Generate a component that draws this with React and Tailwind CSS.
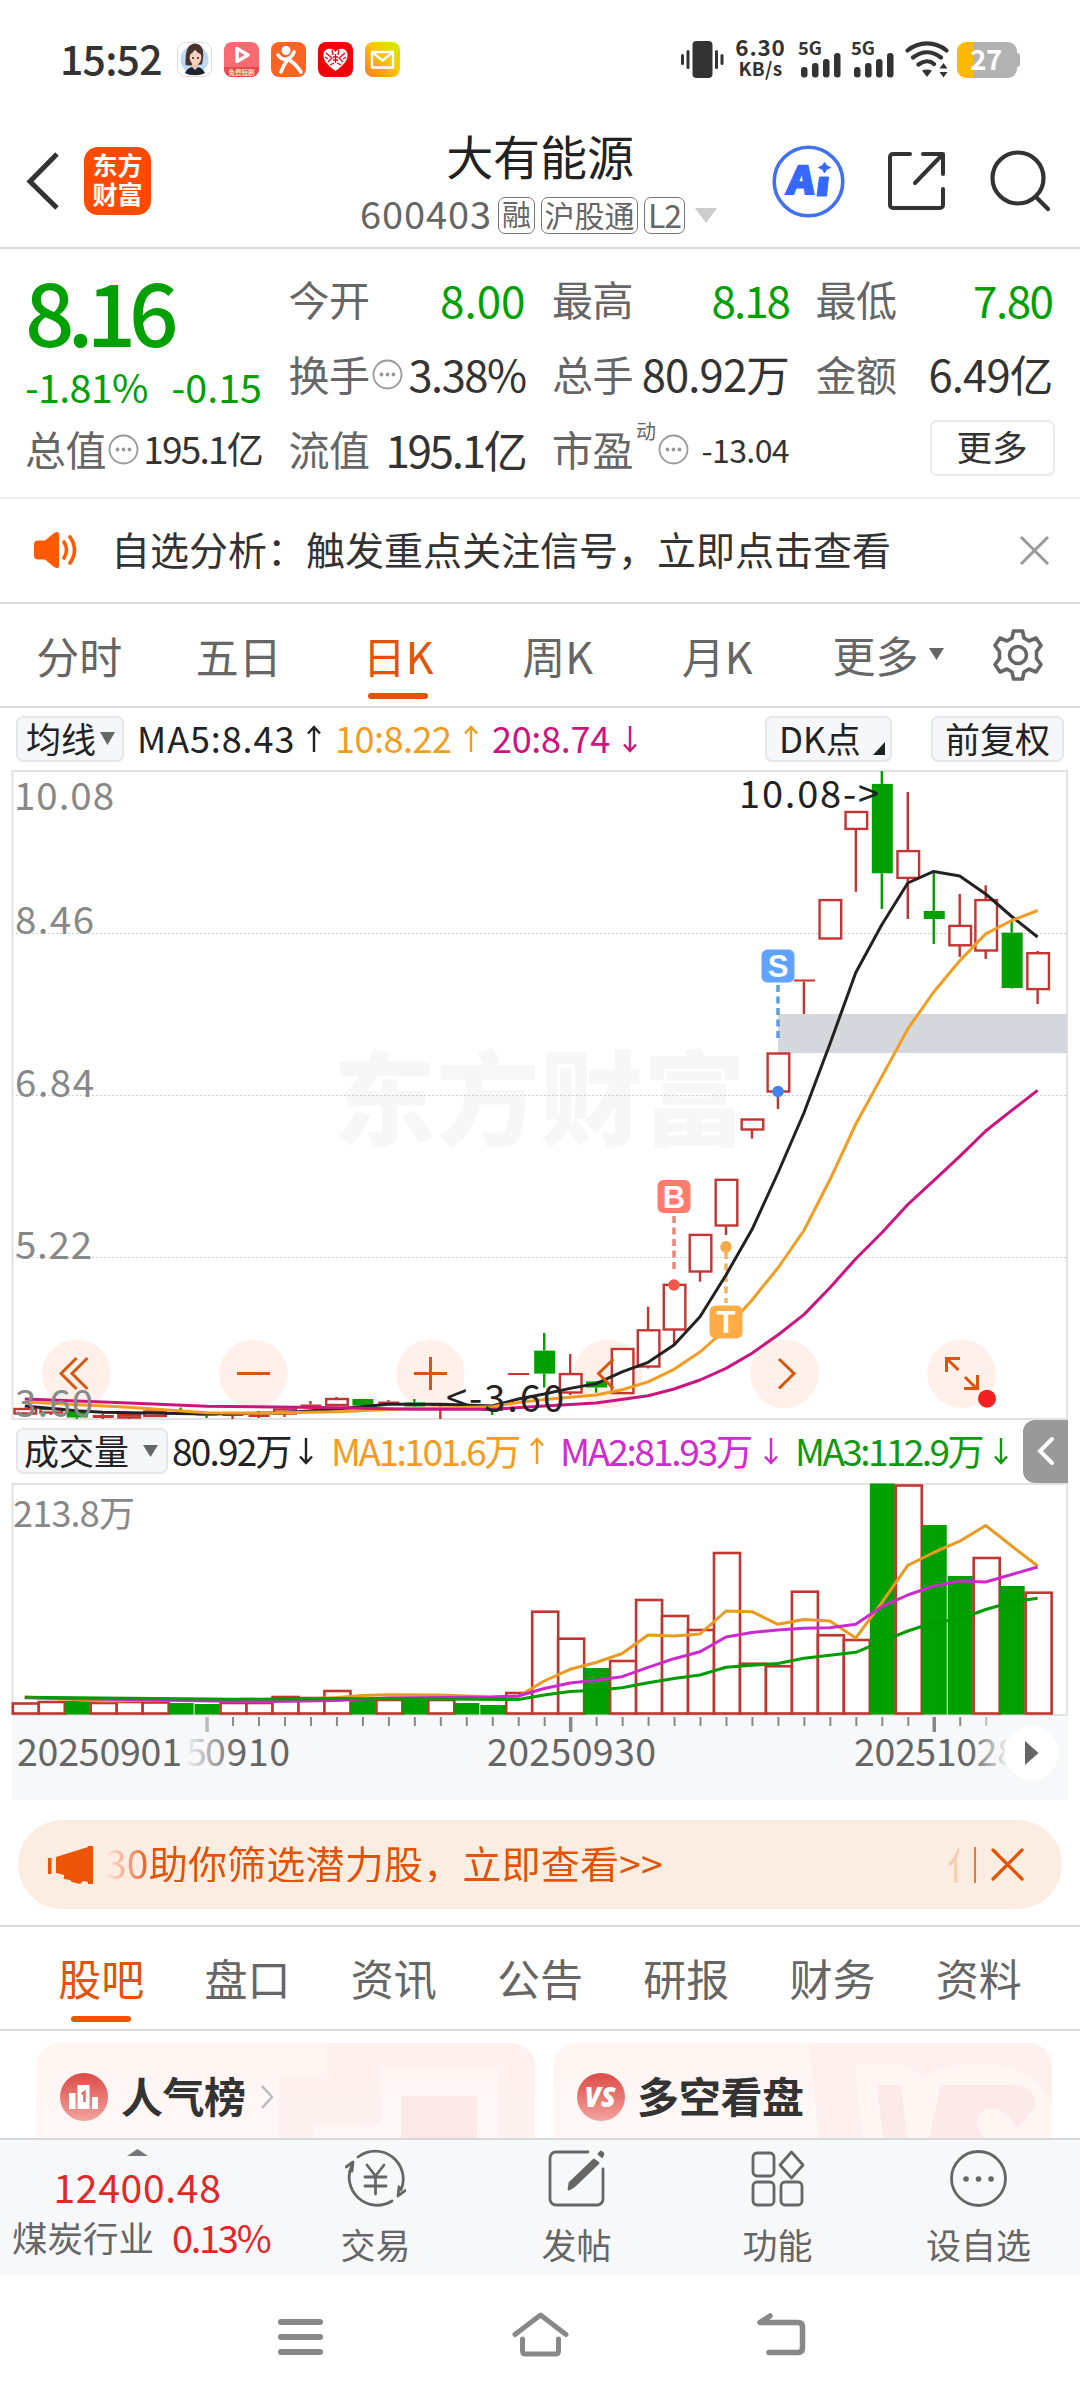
import clsx from 'clsx';

const STEP = 25.97;
const cx = (i) => 24.8 + i * STEP;

// [index, up, bodyTop, bodyBottom, wickTop, wickBottom]
const CANDLES = [
  [0, 1, 1408.5, 1414, 1408, 1414],
  [1, 1, 1408.5, 1413, 1407, 1415],
  [2, 0, 1411.5, 1417.5, 1408, 1419],
  [3, 1, 1415, 1418, 1414, 1419],
  [4, 1, 1414.5, 1418, 1414, 1419],
  [5, 1, 1411, 1416.5, 1411, 1417],
  [6, 0, 1412, 1413, 1407.5, 1413],
  [7, 0, 1414, 1415.5, 1413, 1418],
  [8, 1, 1414.5, 1416, 1414, 1419],
  [9, 1, 1415, 1417, 1411, 1418],
  [10, 1, 1409, 1414, 1409, 1417],
  [11, 1, 1404.5, 1406, 1401, 1407],
  [12, 1, 1398.5, 1405.5, 1397, 1406],
  [13, 0, 1399, 1405.5, 1399, 1405.5],
  [14, 1, 1401.5, 1404, 1400, 1404],
  [15, 0, 1402.5, 1406.5, 1399, 1407],
  [16, 1, 1405, 1406, 1404, 1419],
  [17, 0, 1404, 1406, 1403, 1406],
  [18, 0, 1409.5, 1411, 1409, 1415],
  [19, 1, 1373, 1375, 1373, 1375],
  [20, 0, 1350.6, 1373.6, 1333, 1387.5],
  [21, 1, 1373.6, 1393, 1354, 1395],
  [22, 0, 1381.4, 1387.5, 1381, 1392.7],
  [23, 1, 1348.5, 1393.6, 1348.5, 1393.6],
  [24, 1, 1329.8, 1367, 1306.8, 1368.5],
  [25, 1, 1284.3, 1330, 1284, 1345],
  [26, 1, 1234.4, 1272, 1234, 1281.7],
  [27, 1, 1179.3, 1226, 1179, 1235],
  [28, 1, 1119, 1130, 1119, 1138.6],
  [29, 1, 1053, 1092, 1053, 1109],
  [30, 1, 979.5, 981.5, 980, 1014],
  [31, 1, 899.6, 939, 899.6, 939],
  [32, 1, 811.5, 829.4, 811.5, 891.8],
  [33, 0, 783.9, 873.3, 771, 909],
  [34, 1, 850.6, 878.4, 792, 919],
  [35, 0, 911, 919, 871.4, 943.9],
  [36, 1, 925.4, 945.8, 894, 956.9],
  [37, 1, 899.6, 951, 885.3, 959],
  [38, 0, 932.6, 988, 921, 988.5],
  [39, 1, 952.7, 989.6, 951, 1004],
];

const MA5 = [[0, 1406], [2, 1410.7], [3, 1412.3], [7, 1414], [10, 1412.7], [12, 1409], [14, 1404.3], [16, 1404.3], [18, 1406], [19, 1399], [20, 1394], [21, 1388.4], [22, 1383.6], [23, 1371.9], [24, 1362.3], [25, 1345], [26, 1316.8], [27, 1275], [28, 1229.6], [29, 1173], [30, 1113], [31, 1044], [32, 972.5], [33, 924.8], [34, 883], [35, 871.4], [36, 876], [37, 894], [38, 916.5], [39, 937]];
const MA10 = [[0, 1402], [4, 1407.3], [7, 1412.7], [9, 1413.3], [12, 1411.7], [15, 1408.5], [18, 1406.7], [19, 1402.5], [20, 1399.6], [22, 1395], [23, 1389.7], [24, 1381.9], [25, 1369.3], [26, 1352], [27, 1329], [28, 1300], [29, 1268], [30, 1230.5], [31, 1179.8], [32, 1124], [33, 1076.6], [34, 1028.9], [35, 992], [36, 960.8], [37, 933.9], [38, 920.5], [39, 910.5]];
const MA20 = [[0, 1399], [4, 1403], [7, 1406.3], [12, 1407.7], [15, 1409.3], [18, 1409.3], [20, 1406], [22, 1403], [24, 1395.7], [25, 1389], [26, 1380], [27, 1368.4], [28, 1353.2], [29, 1335], [30, 1314.6], [31, 1287.8], [32, 1258.7], [33, 1232.7], [34, 1204.5], [35, 1180.6], [36, 1156.4], [37, 1131], [38, 1110.4], [39, 1090.4]];

// [up, top]
const VOLUMES = [
  [1, 1702.5], [1, 1701], [0, 1701], [1, 1702], [1, 1701], [1, 1701.5], [0, 1703], [0, 1704], [1, 1702], [1, 1702],
  [1, 1696], [1, 1697], [1, 1690], [0, 1698], [1, 1699], [0, 1699], [1, 1699], [0, 1703], [0, 1705], [1, 1692],
  [1, 1610.7], [1, 1637.7], [0, 1668], [1, 1660], [1, 1599], [1, 1615], [1, 1629], [1, 1552], [1, 1662.7], [1, 1665.3],
  [1, 1590.7], [1, 1634.3], [1, 1639], [0, 1483.5], [1, 1484.5], [0, 1525], [0, 1576], [1, 1557], [0, 1586], [1, 1591.7],
];

const VMA1 = [[0, 1697], [3, 1701], [7, 1699.5], [10, 1700], [12, 1697.5], [13, 1695.5], [14, 1694.7], [16, 1695], [18, 1697], [19, 1696.5], [20, 1681], [21, 1669.3], [22, 1662.5], [23, 1653.5], [24, 1635], [25, 1636], [26, 1634], [27, 1611], [28, 1611.7], [29, 1624.3], [30, 1619.5], [31, 1621], [32, 1638], [33, 1602.7], [34, 1565.3], [35, 1552.5], [36, 1541.2], [37, 1525.5], [38, 1546], [39, 1566]];
const VMA2 = [[0, 1697.7], [9, 1701.7], [12, 1700.5], [14, 1698], [18, 1697], [19, 1696], [20, 1688.5], [21, 1683], [22, 1680.3], [23, 1676.7], [24, 1667.3], [25, 1658.7], [26, 1651.8], [27, 1637], [28, 1632.5], [29, 1630], [30, 1628.3], [31, 1627.7], [32, 1624.3], [33, 1606.7], [34, 1595], [35, 1586], [36, 1581], [37, 1582], [38, 1574.5], [39, 1567]];
const VMA3 = [[0, 1697.3], [8, 1699.3], [12, 1698.5], [19, 1699.5], [20, 1695], [21, 1691.5], [22, 1690.3], [23, 1687.7], [24, 1682.7], [25, 1678.5], [26, 1675], [27, 1667.3], [28, 1665.3], [29, 1663.5], [30, 1658.3], [31, 1655.3], [32, 1652.3], [33, 1641.7], [34, 1631], [35, 1622.5], [36, 1619], [37, 1609.5], [38, 1602], [39, 1598.3]];

const line = (pts) => pts.map(([i, y]) => `${cx(i).toFixed(1)},${y}`).join(' ');

function Line({ pts, color, width = 3 }) {
  return <polyline points={line(pts)} fill="none" stroke={color} strokeWidth={width} strokeLinejoin="round" />;
}

function Tri({ size = 15, height = 12, color = '#666', up = false }) {
  return (
    <svg width={size} height={height} viewBox="0 0 10 10" preserveAspectRatio="none" className="shrink-0">
      <path d={up ? 'M5 0L10 10H0z' : 'M0 0H10L5 10z'} fill={color} />
    </svg>
  );
}

function Arrow({ color, down = false }) {
  return (
    <svg width="14" height="28" viewBox="0 0 14 28" fill="none" stroke={color} strokeWidth="2.400" className={clsx('shrink-0', down && 'rotate-180')}>
      <path d="M7 27V2M1 8.500L7 2l6 6.500" />
    </svg>
  );
}

function Dots() {
  return (
    <svg width="31" height="31" viewBox="0 0 31 31" className="shrink-0">
      <circle cx="15.500" cy="15.500" r="14" fill="none" stroke="#999" strokeWidth="1.800" />
      <circle cx="9.500" cy="15.500" r="1.900" fill="#999" />
      <circle cx="15.500" cy="15.500" r="1.900" fill="#999" />
      <circle cx="21.500" cy="15.500" r="1.900" fill="#999" />
    </svg>
  );
}

function AppBadges() {
  return (
    <div className="ml-[15px] flex gap-[12px]">
      <svg width="35" height="35" viewBox="0 0 35 35">
        <rect x=".5" y=".5" width="34" height="34" rx="8" fill="#fff" stroke="#ddd" />
        <circle cx="17.500" cy="17.500" r="14" fill="#bcd9f5" />
        <path d="M8.500 23C8 8 11 2 18 1.500c8 0 9 9 8 15l-1 6-13 1z" fill="#4a332d" />
        <path d="M15 20h6v6h-6z" fill="#eec2ae" />
        <ellipse cx="18.500" cy="15.500" rx="5.800" ry="7.500" fill="#f6d2c0" />
        <path d="M12 13c2-1 5-3 6-6 1 3 4 4 7 6 0-6-2-9-6.500-9S12 8 12 13z" fill="#4a332d" />
        <path d="M8 31c2-4 4-5 7-6l3 3 3-3c3 1 5 2 7 6-5 3-15 3-20 0z" fill="#1f2330" />
        <circle cx="16" cy="16" r="1" fill="#222" />
        <circle cx="21" cy="16" r="1" fill="#222" />
      </svg>
      <svg width="35" height="35" viewBox="0 0 35 35">
        <rect width="35" height="35" rx="8" fill="#f96a72" />
        <path d="M0 25h35v2a8 8 0 0 1-8 8H8a8 8 0 0 1-8-8z" fill="#e64a50" />
        <path d="M13 6.500v13l11-6.500z" fill="none" stroke="#fff" strokeWidth="3.500" strokeLinejoin="round" />
        <text x="17.500" y="32.500" textAnchor="middle" fontSize="6.500" fontWeight="700" fill="#ffe3b0">免费短剧</text>
      </svg>
      <svg width="35" height="35" viewBox="0 0 35 35">
        <rect width="35" height="35" rx="8" fill="#fd6325" />
        <circle cx="15" cy="8.500" r="4.500" fill="#fff" />
        <path d="M7 13c3 4 6 5 9 4s6-4 7-7M10 30c2-6 4-9 7-13 3 2 8 5 13 13" fill="none" stroke="#fff" strokeWidth="3.600" strokeLinecap="round" />
      </svg>
      <svg width="35" height="35" viewBox="0 0 35 35">
        <rect width="35" height="35" rx="8" fill="#f40009" />
        <path d="M17.500 29C9 23 5 18 5.500 12.500 6 6 14 5 17.500 10 21 5 29 6 29.500 12.500 30 18 26 23 17.500 29z" fill="#fff" />
        <path d="M8 11l6 5-4 4M27 11l-6 5 4 4M14 8l1 5M21 8l-1 5M15 15h5M15 18h5M17.500 12v9M12 23l4-2M23 23l-4-2M7 15l3 2M28 15l-3 2" stroke="#f40009" strokeWidth="1.300" fill="none" />
      </svg>
      <svg width="35" height="35" viewBox="0 0 35 35">
        <defs>
          <linearGradient id="mail" x1="1" y1="0" x2="0" y2="1">
            <stop offset="0" stopColor="#c8f000" />
            <stop offset=".45" stopColor="#fdc50a" />
            <stop offset="1" stopColor="#ff7a1c" />
          </linearGradient>
        </defs>
        <rect width="35" height="35" rx="8" fill="url(#mail)" />
        <path d="M7 10h21v15.500H7zM7.500 10.500l10 8 10-8" fill="none" stroke="#fff" strokeWidth="2.400" strokeLinejoin="round" />
      </svg>
    </div>
  );
}

function Signal() {
  return (
    <svg width="44" height="37" viewBox="0 0 44 37" className="overflow-visible">
      <text x="-1" y="13.500" fontSize="18" fontWeight="700" fill="#333" textLength="24" lengthAdjust="spacingAndGlyphs">5G</text>
      <g fill="#333">
        <rect x="2" y="26" width="6.500" height="10.500" rx="3" />
        <rect x="13" y="22" width="6.500" height="14.500" rx="3" />
        <rect x="24" y="18" width="6.500" height="18.500" rx="3" />
        <rect x="35" y="12" width="6.500" height="24.500" rx="3" />
      </g>
    </svg>
  );
}

function StatusBar() {
  return (
    <div className="flex h-[120px] items-center pr-[60px] pl-[60px] text-[#333]">
      <span className="-mt-[5px] w-[102px] text-[41px] leading-none font-medium tracking-[-0.8px]">15:52</span>
      <AppBadges />
      <div className="ml-auto flex items-center">
        <svg width="43" height="37" viewBox="0 0 43 37" fill="#333">
          <rect x="11.500" y="0" width="20" height="37" rx="4" />
          <rect x="5.500" y="9" width="3" height="19" rx="1.500" />
          <rect x="0" y="13" width="3" height="11" rx="1.500" />
          <rect x="34" y="9" width="3" height="19" rx="1.500" />
          <rect x="39.500" y="13" width="3" height="11" rx="1.500" />
        </svg>
        <div className="ml-[13px] flex w-[47px] flex-col items-center gap-[2px] font-bold">
          <span className="-mt-[6px] text-[22.500px] leading-[19px] tracking-[0.8px]">6.30</span>
          <span className="text-[19px] leading-[19px] tracking-[0.3px]">KB/s</span>
        </div>
        <div className="ml-[15px] flex gap-[9px]">
          <Signal />
          <Signal />
        </div>
        <svg width="44" height="37" viewBox="0 0 44 37" className="ml-[9px]" fill="none" stroke="#333" strokeWidth="4.200" strokeLinecap="round">
          <path d="M2.500 9.500C14 0 30 0 41.500 9.500M8 16.500C17 9.500 27 9.500 36 16.500M13.500 23.500C19 19.500 25 19.500 29 23" />
          <path d="M17 29.500q5-2 10 0L22 36zM34.500 27.500l4-5.500 4 5.500zM34.500 31l4 5.500 4-5.500z" fill="#333" stroke="none" />
        </svg>
        <div className="ml-[8px] flex items-center">
          <div className="flex h-[36px] w-[60px] items-center justify-center rounded-[9px] bg-[linear-gradient(90deg,#ffb800_27%,#b2b2b2_27%)] text-[27.500px] leading-none font-bold tracking-[-0.5px] text-white">
            <span className="-mt-[3px] -ml-[2px]">27</span>
          </div>
          <div className="h-[14px] w-[3px] rounded-r bg-[#b2b2b2]" />
        </div>
      </div>
    </div>
  );
}

function Badge({ className, children }) {
  return (
    <span className={clsx('flex h-[37px] items-center justify-center rounded-[7px] border border-[#777] leading-none', className)}>
      <span className="-mt-[3px]">{children}</span>
    </span>
  );
}

function Header() {
  return (
    <header className="flex h-[130px] items-start border-b-2 border-[#d9dadd] pt-[11px]">
      <div className="flex w-[360px] items-center pt-[16px] pl-[26px]">
        <svg width="34" height="60" viewBox="0 0 34 60" fill="none" stroke="#333" strokeWidth="5">
          <path d="M31 3L4 30.500 31 57" />
        </svg>
        <div className="ml-[24px] flex h-[68px] w-[67px] flex-col items-center justify-center rounded-[14px] bg-[#ff4a00] text-[25px] leading-[29px] font-bold text-white">
          <span className="-mt-[4px]">东方</span>
          <span>财富</span>
        </div>
      </div>
      <div className="flex w-[360px] flex-col items-center">
        <h1 className="text-[47px] leading-none tracking-[-0.1px] text-[#222]">大有能源</h1>
        <div className="mt-[19px] flex items-center gap-[6px] text-[32px] text-[#666]">
          <span className="-mt-[4px] -ml-[3px] text-[38px] leading-none tracking-[0.9px]">600403</span>
          <Badge className="w-[37px] text-[29px]">融</Badge>
          <Badge className="w-[97px] text-[30px]">沪股通</Badge>
          <Badge className="w-[41px] text-[32px] tracking-[-1px]">L2</Badge>
          <span className="ml-[4px]"><Tri size={22} height={15} color="#ccc" /></span>
        </div>
      </div>
      <div className="flex grow items-center pt-[14px] pl-[52px]">
        <svg width="73" height="73" viewBox="0 0 73 73">
          <circle cx="36.500" cy="36.500" r="34.300" fill="none" stroke="#4170f0" strokeWidth="3.600" />
          <text x="14" y="49" fontSize="38" fontWeight="900" fill="#3668ff" stroke="#3668ff" strokeWidth="2" textLength="27" lengthAdjust="spacingAndGlyphs" transform="skewX(-7) translate(6 0)">A</text>
          <path d="M47.500 32h9l-2 19H45z" fill="#3668ff" stroke="#3668ff" strokeLinejoin="round" />
          <path d="M52.500 17.500l2 3 4 2-4 2-2 3.500-2-3.500-4-2 4-2z" fill="#3668ff" stroke="#3668ff" />
        </svg>
        <svg width="60" height="60" viewBox="0 0 60 60" className="ml-[42px]" fill="none" stroke="#333" strokeWidth="4" strokeLinecap="round" strokeLinejoin="round">
          <path d="M23 3H6a3 3 0 0 0-3 3v48a3 3 0 0 0 3 3h47a3 3 0 0 0 3-3V38M36 3h20v20M56 3L28 32" />
        </svg>
        <svg width="62" height="62" viewBox="0 0 62 62" className="ml-[43px]" fill="none" stroke="#333" strokeWidth="4.200" strokeLinecap="round">
          <circle cx="28" cy="28" r="25.500" />
          <path d="M46 47l12 12" />
        </svg>
      </div>
    </header>
  );
}

function Cell({ label, value, green = false, dots = false, sup, text = 'text-[44px]' }) {
  return (
    <div className="flex h-[75px] items-center">
      <span className="text-[41px] leading-none tracking-[-0.5px] text-[#666]">{label}</span>
      {sup && <span className="mb-[36px] ml-[3px] text-[20px] leading-none text-[#666]">{sup}</span>}
      {dots && <span className="mt-[2px] ml-[2px]"><Dots /></span>}
      <span className={clsx('ml-auto leading-none whitespace-nowrap', text, green ? 'text-[#00a000]' : 'text-[#333]')}>{value}</span>
    </div>
  );
}

function Quote() {
  return (
    <section className="flex h-[250px] gap-[26.500px] border-b-2 border-[#ededee] pt-[12px] pl-[25px]">
      <div className="w-[237px] text-[#00a000]">
        <div className="h-[93px] pt-[5px] text-[87px] leading-none font-medium tracking-[-7px]">8.16</div>
        <div className="flex h-[57px] items-center justify-between pt-[5px] text-[39.500px] leading-none tracking-[-0.7px]">
          <span>-1.81%</span>
          <span className="tracking-normal">-0.15</span>
        </div>
        <Cell label="总值" value="195.1亿" dots text="text-[37px] tracking-[-1.8px]" />
      </div>
      <div className="w-[237px]">
        <Cell label="今开" value="8.00" green />
        <Cell label="换手" value="3.38%" dots text="text-[43.500px] tracking-[-1.5px]" />
        <Cell label="流值" value="195.1亿" text="text-[44px] tracking-[-2.3px]" />
      </div>
      <div className="w-[237px]">
        <Cell label="最高" value="8.18" green text="text-[44px] tracking-[-2px]" />
        <Cell label="总手" value="80.92万" text="text-[43.500px] tracking-[-0.8px]" />
        <Cell label="市盈" value="-13.04" sup="动" dots text="text-[32px] tracking-[-0.6px]" />
      </div>
      <div className="w-[237px]">
        <Cell label="最低" value="7.80" green text="text-[44px] tracking-[-1.5px]" />
        <Cell label="金额" value="6.49亿" text="text-[43.500px] tracking-[-0.8px]" />
        <div className="flex h-[73px] items-center justify-end">
          <button className="-mr-[2px] h-[56px] w-[125px] rounded-[7px] border-2 border-[#e9eaec] pb-[5px] text-[35.500px] leading-none text-[#333]">更多</button>
        </div>
      </div>
    </section>
  );
}

function Notice() {
  return (
    <div className="flex h-[106px] items-center border-b-2 border-[#d9dadd] pr-[30px] pl-[33px]">
      <svg width="46" height="38" viewBox="0 0 46 38">
        <path d="M5 9.500h7L21 2q5-3 5 2v30q0 5-5 2l-9-7.500H5q-4 0-4-4v-11q0-4 4-4z" fill="#ff5a00" />
        <path d="M31 11q5 8 0 16M37 6q9 13 0 26" fill="none" stroke="#ff5a00" strokeWidth="3.600" strokeLinecap="round" />
      </svg>
      <span className="-mt-[3px] ml-[32px] text-[39px] leading-none text-[#333]">自选分析：触发重点关注信号，立即点击查看</span>
      <svg width="31" height="31" viewBox="0 0 31 31" className="ml-auto" stroke="#999" strokeWidth="3">
        <path d="M2 2l27 27M29 2L2 29" />
      </svg>
    </div>
  );
}

function PeriodTabs() {
  const tabs = ['分时', '五日', '日K', '周K', '月K'];
  return (
    <nav className="flex h-[104px] items-center border-b-2 border-[#d9dadd] text-[43px] leading-none text-[#666]">
      {tabs.map((t) => (
        <div key={t} className={clsx('flex h-full w-[159.500px] flex-col items-center pt-[30px] pr-[1px]', t === '日K' && 'text-[#e35205]')}>
          <span>{t}</span>
          {t === '日K' && <span className="mt-[16px] h-[6px] w-[60px] rounded-full bg-[#e35205]" />}
        </div>
      ))}
      <div className="-mt-[2px] ml-[35px] flex items-center gap-[10px]">
        <span>更多</span>
        <Tri size={15} height={12} />
      </div>
      <svg width="54" height="54" viewBox="0 0 54 54" className="ml-[47px]" fill="none" stroke="#666" strokeWidth="3.600" strokeLinejoin="round">
        <path d="M22.500 3h9l1.500 7 5 3 7-3 5 7.500-4.500 6v7l4.500 6L45 44l-7-3-5 3-1.500 7h-9L21 44l-5-3-7 3-5-7.500 4.500-6v-7L4 17.500 9 10l7 3 5-3z" />
        <circle cx="27" cy="27" r="8.500" />
      </svg>
    </nav>
  );
}

function Chip({ className, children }) {
  return (
    <div className={clsx('flex h-[46px] items-center rounded-[7px] border-2 border-[#e4e6ea] bg-[#f6f7fa] text-[35px] leading-none text-[#222]', className)}>
      {children}
    </div>
  );
}

function MaRow() {
  return (
    <div className="flex h-[62px] items-center px-[16px] text-[36px] leading-none whitespace-nowrap">
      <Chip className="w-[108px] gap-[4px] pl-[8px]">
        <span className="-mt-[3px]">均线</span>
        <Tri size={15} height={13} />
      </Chip>
      <span className="-mt-[3px] ml-[13px] w-[157px] tracking-[0.9px] text-[#222]">MA5:8.43</span>
      <span className="ml-[13px]"><Arrow color="#222" /></span>
      <span className="-mt-[3px] ml-[14px] w-[118px] tracking-[-0.5px] text-[#f39c1f]">10:8.22</span>
      <span className="ml-[11px]"><Arrow color="#f39c1f" /></span>
      <span className="-mt-[3px] ml-[14px] w-[119px] tracking-[-0.3px] text-[#cc1480]">20:8.74</span>
      <span className="ml-[12px]"><Arrow color="#cc1480" down /></span>
      <Chip className="ml-auto w-[127px] justify-between pr-[5px] pl-[12px]">
        <span className="-mt-[3px]">DK点</span>
        <svg width="12" height="13" viewBox="0 0 12 13" className="mt-[20px]"><path d="M12 0v13H0z" fill="#222" /></svg>
      </Chip>
      <Chip className="ml-[39px] w-[133px] justify-center">
        <span className="-mt-[3px]">前复权</span>
      </Chip>
    </div>
  );
}

function Candle({ d }) {
  const [i, up, top, bottom, wTop, wBottom] = d;
  const x = cx(i);
  const h = bottom - top;
  const color = up ? '#c23531' : '#00a000';
  return (
    <g stroke={color} strokeWidth="2.400">
      {wTop < top && <path d={`M${x} ${wTop}V${top}`} />}
      {wBottom > bottom && <path d={`M${x} ${bottom}V${wBottom}`} />}
      {up && h > 3
        ? <rect x={x - 10.3} y={top + 0.5} width="21.600" height={h - 1} fill="#fff" />
        : <rect x={x - 10} y={top} width="21" height={h} fill={color} stroke="none" />}
    </g>
  );
}

function Marker({ x, y, letter, color }) {
  return (
    <g>
      <rect x={x - 16.5} y={y} width="33" height="33" rx="6" fill={color} />
      <text x={x} y={y + 27.5} textAnchor="middle" fontSize="31" fontWeight="600" fill="#fff" className="font-['Liberation_Sans']">{letter}</text>
    </g>
  );
}

function PriceChart() {
  return (
    <svg width="1080" height="650" viewBox="0 770 1080 650" className="block shrink-0">
      <text x="333" y="1138" fontSize="103" fontWeight="900" fill="#f7f7f7" textLength="413">东方财富</text>
      <g stroke="#cfcfcf" strokeWidth="1" strokeDasharray="2 2">
        <path d="M12 933.500H1068M12 1095.500H1068M12 1257.500H1068" />
      </g>
      <g fill="#fff1ea">
        {[76.4, 253.4, 430.4, 607.8, 784.5, 961.5].map((x) => <circle key={x} cx={x} cy="1373.700" r="34.300" />)}
      </g>
      <rect x="12.500" y="771" width="1054.500" height="648" fill="none" stroke="#e2e2e2" strokeWidth="2" />
      <rect x="778" y="1014" width="289" height="39" fill="#d4d7dc" />
      {CANDLES.map((d) => <Candle key={d[0]} d={d} />)}
      <g fill="none" strokeWidth="3.500" strokeDasharray="7 4.500">
        <path d="M778 985V1042" stroke="#5a9ce8" />
        <path d="M674 1216V1273" stroke="#ee8377" />
        <path d="M726 1252V1303" stroke="#f2b45c" />
      </g>
      <circle cx="778" cy="1091.500" r="5.800" fill="#3f83ec" />
      <circle cx="674" cy="1285" r="5.800" fill="#f0574b" />
      <circle cx="726" cy="1246.800" r="5.800" fill="#f8aa48" />
      <Line pts={MA5} color="#222" />
      <Marker x={778} y={949.5} letter="S" color="#5fa3ff" />
      <Marker x={674} y={1180} letter="B" color="#ff7b6b" />
      <Line pts={MA10} color="#f39c1f" />
      <Marker x={726} y={1305.6} letter="T" color="#ffac47" />
      <Line pts={MA20} color="#cc1480" />
      <g fill="none" stroke="#d9560f" strokeWidth="3">
        <path d="M76.500 1358L61 1373.500 76.500 1389M87.500 1358L72 1373.500 87.500 1389" />
        <path d="M237 1373.500H270M414 1373.500H447M430.500 1357V1390" />
        <path d="M613.500 1359L598.500 1373.500 613.500 1388.500M779 1359L794 1373.500 779 1388.500" />
        <path d="M946.500 1372V1358.500H960M946.500 1358.500L958.500 1370M965 1377L976.500 1388.500M964 1388.500H977.500V1375" />
      </g>
      <circle cx="987" cy="1398.700" r="9" fill="#f22020" />
      <g fontSize="38.500" fill="#888">
        <text x="14" y="810" textLength="100">10.08</text>
        <text x="15" y="934" textLength="79">8.46</text>
        <text x="15" y="1097" textLength="79">6.84</text>
        <text x="15" y="1259" textLength="77">5.22</text>
        <text x="15" y="1417" textLength="78">3.60</text>
      </g>
      <g fontSize="38" fill="#222">
        <text x="739" y="808" textLength="140">10.08-&gt;</text>
        <text x="446" y="1412" textLength="118">&lt;-3.60</text>
      </g>
    </svg>
  );
}

function VolRow() {
  return (
    <div className="flex h-[63px] items-center pl-[16px] text-[37px] leading-none whitespace-nowrap">
      <Chip className="w-[152px] gap-[14px] pl-[6px]">
        <span className="-mt-[3px]">成交量</span>
        <Tri size={15} height={12} />
      </Chip>
      <span className="-mt-[2px] ml-[4px] w-[116px] tracking-[-1.8px] text-[#222]">80.92万</span>
      <span className="ml-[11px]"><Arrow color="#222" down /></span>
      <span className="-mt-[2px] ml-[18px] w-[188px] tracking-[-2.5px] text-[#f39c1f]">MA1:101.6万</span>
      <span className="ml-[11px]"><Arrow color="#f39c1f" /></span>
      <span className="-mt-[2px] ml-[16px] w-[190px] tracking-[-2.2px] text-[#d02ad0]">MA2:81.93万</span>
      <span className="ml-[14px]"><Arrow color="#d02ad0" down /></span>
      <span className="-mt-[2px] ml-[17px] w-[188px] tracking-[-2.6px] text-[#0f990f]">MA3:112.9万</span>
      <span className="ml-[11px]"><Arrow color="#0f990f" down /></span>
      <div className="mr-[12px] ml-auto flex h-[63px] w-[45px] items-center justify-center rounded-l-[12px] bg-[#999]">
        <svg width="18" height="30" viewBox="0 0 18 30" fill="none" stroke="#fff" strokeWidth="4" strokeLinecap="round"><path d="M15 3L3 15l12 12" /></svg>
      </div>
    </div>
  );
}

function VolumeChart() {
  return (
    <svg width="1080" height="319" viewBox="0 1483 1080 319" className="block shrink-0">
      <defs>
        <linearGradient id="fadeIn">
          <stop offset="0" stopColor="#f7f8fa" />
          <stop offset="1" stopColor="#f7f8fa" stopOpacity="0" />
        </linearGradient>
        <linearGradient id="fadeOut">
          <stop offset="0" stopColor="#f7f8fa" stopOpacity="0" />
          <stop offset="1" stopColor="#f7f8fa" stopOpacity=".9" />
        </linearGradient>
      </defs>
      <rect x="12.500" y="1484" width="1054.500" height="231" fill="#fff" stroke="#e2e2e2" strokeWidth="2" />
      {VOLUMES.map(([up, top], i) => (up
        ? <rect key={i} x={cx(i) - 12} y={top + 1} width="26" height={1712.5 - top} fill="#fff" stroke="#c23531" strokeWidth="2.600" />
        : <rect key={i} x={cx(i) - 12} y={top} width="25" height={1714.5 - top} fill="#00a000" />))}
      <Line pts={VMA1} color="#eb9a20" />
      <Line pts={VMA2} color="#cc2acc" />
      <Line pts={VMA3} color="#009c00" />
      <text x="13" y="1527" fontSize="36" fill="#888" textLength="122">213.8万</text>
      <rect x="12" y="1716" width="1056" height="84" fill="#f7f8fa" />
      {Array.from({ length: 31 }, (_, k) => k + 7).map((i) => {
        const major = i === 7 || i === 21 || i === 35;
        return <path key={i} d={`M${cx(i) + 0.5} 1717V${major ? 1732 : 1726}`} stroke={i === 7 || i === 37 ? '#bbb' : '#888'} strokeWidth={major ? 3.5 : 2} />;
      })}
      <g fontSize="37.500" fill="#666">
        <text x="205" y="1766" textLength="85">0910</text>
        <text x="186" y="1766">5</text>
        <rect x="184" y="1737" width="52" height="40" fill="url(#fadeIn)" />
        <text x="17" y="1766" textLength="165">20250901</text>
        <text x="487" y="1766" textLength="169">20250930</text>
        <text x="854" y="1766" textLength="164">20251028</text>
      </g>
      <rect x="970" y="1737" width="36" height="40" fill="url(#fadeOut)" />
      <rect x="1006" y="1737" width="28" height="40" fill="#f7f8fa" />
      <circle cx="1031.700" cy="1753" r="27" fill="#fff" />
      <path d="M1025 1741L1038.500 1753 1025 1765z" fill="#666" />
    </svg>
  );
}

function Promo() {
  return (
    <div className="mx-[18px] mt-[18px] flex h-[90px] items-center rounded-full bg-[#fcede3] pl-[29px] text-[39px] leading-none text-[#e35205]">
      <svg width="47" height="40" viewBox="0 0 47 40" fill="#eb5505" className="shrink-0">
        <path d="M1 13h3.500v16H1zM9 12L41 2V1h5v38h-5v-2l-5-1-3 3-8-2-2-2-6-1v-4l-8-2z" />
      </svg>
      <div className="ml-[13px] flex h-[50px] grow items-center overflow-hidden">
        <span className="-mt-[4px] -ml-[2px] bg-gradient-to-r from-[#fcede3] to-[#e35205] to-[45px] bg-clip-text tracking-[0.2px] text-transparent">30助你筛选潜力股，立即查看&gt;&gt;</span>
      </div>
      <span className="-mt-[3px] w-[12px] overflow-hidden text-[#f8cdb5]">什</span>
      <span className="ml-[15px] h-[36px] w-[2px] bg-[#e07a45]" />
      <svg width="33" height="33" viewBox="0 0 33 33" className="mr-[38px] ml-[15px]" stroke="#e35205" strokeWidth="3.200" strokeLinecap="round">
        <path d="M2 2l29 29M31 2L2 31" />
      </svg>
    </div>
  );
}

function SectionTabs() {
  const tabs = ['股吧', '盘口', '资讯', '公告', '研报', '财务', '资料'];
  return (
    <nav className="mt-[16px] flex h-[106px] border-y-2 border-[#d9dadd] px-[28px] text-[43px] leading-none text-[#666]">
      {tabs.map((t, i) => (
        <div key={t} className={clsx('flex w-[146.300px] flex-col items-center pt-[29px]', i === 0 && 'text-[#e35205]')}>
          <span>{t}</span>
          {i === 0 && <span className="mt-[17px] h-[6px] w-[60px] rounded-full bg-[#eb5505]" />}
        </div>
      ))}
    </nav>
  );
}

function Cards() {
  return (
    <div className="flex h-[107px] gap-[18px] overflow-hidden pt-[12px] pl-[36px]">
      <div className="relative h-[140px] w-[499px] shrink-0 overflow-hidden rounded-t-[24px] bg-gradient-to-b from-[#fff5f3] to-[#fffaf8]">
        <svg width="499" height="96" viewBox="0 0 499 96" className="absolute top-0 left-0">
          <path d="M243 96V32H290V0H499V96H462V24H345V82H278V96z" fill="#fdeeec" opacity=".6" />
          <path d="M365 96V53H441V96z" fill="#fce9e7" />
        </svg>
        <div className="relative flex h-[108px] items-center pl-[24px]">
          <svg width="48" height="48" viewBox="0 0 48 48">
            <defs>
              <linearGradient id="ball" x2="0" y2="1">
                <stop offset="0" stopColor="#dc4b46" />
                <stop offset="1" stopColor="#f4a39f" />
              </linearGradient>
            </defs>
            <circle cx="24" cy="24" r="24" fill="url(#ball)" />
            <path d="M9 20h6.500v16H9zM17.500 12h12v24h-12zM32 24h6v12h-6z" fill="#fff" />
            <path d="M21.500 21l3-2v10" fill="none" stroke="#e06a66" strokeWidth="2.500" />
          </svg>
          <span className="-mt-[5px] ml-[13px] text-[42px] leading-none font-bold tracking-[-0.5px] text-[#333]">人气榜</span>
          <svg width="15" height="26" viewBox="0 0 15 26" className="ml-[14px]" fill="none" stroke="#bbb" strokeWidth="2.500"><path d="M2 2l10 11L2 24" /></svg>
        </div>
      </div>
      <div className="relative h-[140px] w-[499px] shrink-0 overflow-hidden rounded-t-[24px] bg-gradient-to-b from-[#fff5f3] to-[#fffaf8]">
        <svg width="499" height="96" viewBox="0 0 499 96" className="absolute top-0 left-0">
          <path d="M256 0H499V96H266z" fill="#fdf0ee" />
          <path d="M302 22h52l18 12q40-22 90-8 30 12 37 36V96H310z" fill="#fff5f3" />
          <path d="M324 42h24l6 54h-24zM388 42h34l-18 54h-28z" fill="#fceae8" />
          <path d="M400 42h60q24 2 22 22-10 14-18 20-14-22-30-18-20 10-2 30H392z" fill="#fceae8" />
        </svg>
        <div className="relative flex h-[108px] items-center pl-[24px]">
          <svg width="48" height="48" viewBox="0 0 48 48">
            <circle cx="24" cy="24" r="24" fill="url(#ball)" />
            <text x="23" y="34" textAnchor="middle" fontSize="28" fontWeight="800" fontStyle="italic" fill="#fff" className="font-['Open_Sans']" textLength="31" lengthAdjust="spacingAndGlyphs">VS</text>
          </svg>
          <span className="-mt-[4px] ml-[12px] text-[42px] leading-none font-bold tracking-[-0.3px] text-[#333]">多空看盘</span>
        </div>
      </div>
    </div>
  );
}

const ACTIONS = [
  ['交易', <>
    <path d="M13 9A28 28 0 0 1 56 42M47 53A28 28 0 0 1 7 17M1 19l7-5-1 9M61 42l-8 6 1-9" />
    <path d="M22 17l8.500 11L39 17M30.500 28v18M20 29h21M20 38h21" />
  </>],
  ['发帖', <>
    <path d="M42 4H10a6 6 0 0 0-6 6v41a6 6 0 0 0 6 6h41a6 6 0 0 0 6-6V21" />
    <path d="M48 12l4 3L28 38l-5 3 1-6zM53 6l2-2 2 1.500-1 3z" fill="#666" />
  </>],
  ['功能', <>
    <rect x="6" y="5" width="21" height="23" rx="4" />
    <rect x="6" y="34" width="21" height="23" rx="4" />
    <rect x="34" y="34" width="21" height="23" rx="4" />
    <path d="M44.500 4L56 17 44.500 30 33 17z" />
  </>],
  ['设自选', <>
    <circle cx="30.500" cy="30.500" r="27" />
    <path d="M18 31h.1M30.500 31h.1M43 31h.1" strokeWidth="5.500" />
  </>],
];

function BottomBar() {
  return (
    <div className="flex h-[137px] border-t-2 border-[#d5d8dd] bg-[#f7f8fa]">
      <div className="flex w-[275px] flex-col items-center leading-none text-[#e02828]">
        <span className="mt-[9px]"><Tri size={21} height={7} up color="#777" /></span>
        <span className="mt-[11px] text-[39px] tracking-[0.7px]">12400.48</span>
        <div className="mt-[12px] flex items-center gap-[18px] self-start pl-[12px] whitespace-nowrap">
          <span className="text-[35.500px] text-[#666]">煤炭行业</span>
          <span className="text-[38px] tracking-[-2.3px]">0.13%</span>
        </div>
      </div>
      {ACTIONS.map(([label, icon]) => (
        <div key={label} className="flex w-[201px] flex-col items-center pt-[8px]">
          <svg width="61" height="61" viewBox="0 0 61 61" fill="none" stroke="#666" strokeWidth="2.800" strokeLinecap="round" strokeLinejoin="round">{icon}</svg>
          <span className="mt-[17px] text-[35px] leading-none text-[#666]">{label}</span>
        </div>
      ))}
    </div>
  );
}

function SystemNav() {
  return (
    <div className="flex h-[126px] items-center justify-center gap-[183px] bg-white pb-[4px]">
      <svg width="57" height="50" viewBox="0 0 57 50" stroke="#888" strokeWidth="6" strokeLinecap="round">
        <path d="M9 12h39M9 27h39M9 42h39" />
      </svg>
      <svg width="57" height="50" viewBox="0 0 57 50" fill="none" stroke="#888" strokeWidth="5" strokeLinecap="round" strokeLinejoin="round">
        <path d="M3 24.500L28.500 5 54 24.500M10.500 29v12q0 3 3 3h30q3 0 3-3V29" />
      </svg>
      <svg width="57" height="50" viewBox="0 0 57 50" fill="none" stroke="#888" strokeWidth="5.500" strokeLinecap="round" strokeLinejoin="round">
        <path d="M18 6l-10 6.500h38q4.500 0 4.500 4.500v21q0 4.500-4.500 4.500H17" />
      </svg>
    </div>
  );
}

export default function App() {
  return (
    <div className="flex h-[2400px] w-[1080px] flex-col overflow-hidden bg-white font-['Noto_Sans_CJK_SC',sans-serif]">
      <StatusBar />
      <Header />
      <Quote />
      <Notice />
      <PeriodTabs />
      <MaRow />
      <PriceChart />
      <VolRow />
      <VolumeChart />
      <Promo />
      <SectionTabs />
      <Cards />
      <BottomBar />
      <SystemNav />
    </div>
  );
}
